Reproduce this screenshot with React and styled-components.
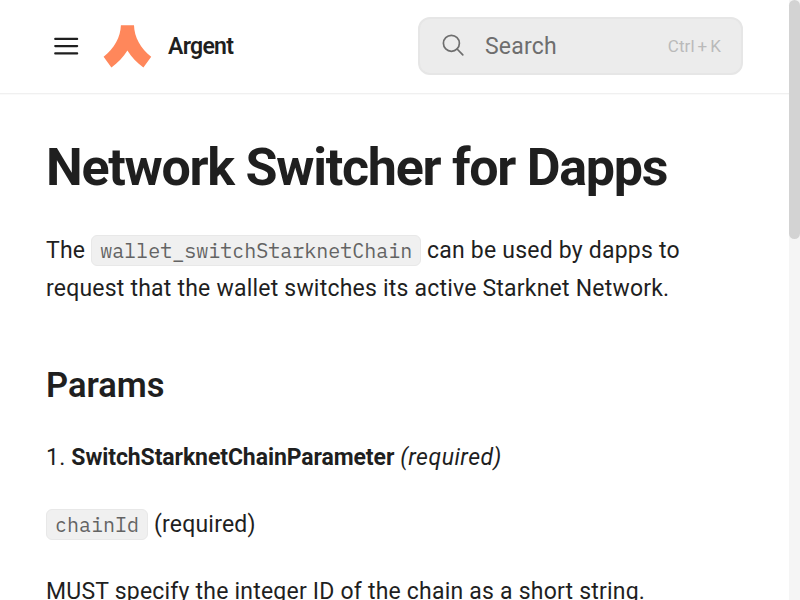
import React from "react";
import styled, { createGlobalStyle } from "styled-components";

const GlobalStyle = createGlobalStyle`
  *, *::before, *::after { box-sizing: border-box; }
  body {
    margin: 0;
    background: #fff;
    color: #1f1f1f;
    font-family: Roboto, "Liberation Sans", sans-serif;
    overflow: hidden;
  }
`;

const Page = styled.div`
  display: flex;
  width: 800px;
  height: 600px;
  overflow: hidden;
`;

const Main = styled.div`
  width: 789px;
  height: 600px;
  overflow: hidden;
`;

const Header = styled.header`
  display: flex;
  align-items: center;
  height: 94px;
  padding: 0 46px 2px 53px;
  border-bottom: 1px solid #f0f0f0;
  box-shadow: 0 1px 0 #fafafa;
`;

const MenuButton = styled.button`
  display: flex;
  width: 26px;
  height: 26px;
  padding: 0;
  border: 0;
  background: none;
`;

const Brand = styled.a`
  display: flex;
  align-items: center;
  gap: 16px;
  margin-left: 24px;
  font-size: 23px;
  font-weight: 600;
  letter-spacing: -0.7px;
  color: #1f1f1f;
`;

const BrandName = styled.span`
  padding-top: 2px;
`;

const Search = styled.div`
  display: flex;
  align-items: center;
  width: 325px;
  height: 58px;
  margin-left: auto;
  padding: 0 20px 0 22px;
  border: 2px solid #e6e6e6;
  border-radius: 12px;
  background: #ececec;
  color: #6e6e6e;
  font-size: 23px;
`;

const SearchLabel = styled.span`
  margin-left: 20px;
  padding-top: 2px;
  letter-spacing: 0.2px;
`;

const Shortcut = styled.kbd`
  margin-left: auto;
  color: #bababa;
  font-family: inherit;
  font-size: 17px;
  word-spacing: -1.4px;
  letter-spacing: 0.1px;
`;

const Article = styled.main`
  padding: 45px 46px 0;
`;

const Title = styled.h1`
  margin: 0;
  font-size: 52px;
  line-height: 58px;
  font-weight: 700;
  letter-spacing: -1.27px;
  white-space: nowrap;
`;

const Paragraph = styled.p`
  margin: ${(p) => p.$top}px 0 0;
  font-size: 23px;
  line-height: 38px;
  letter-spacing: 0.21px;
  white-space: nowrap;
`;

const Strong = styled.b`
  letter-spacing: -0.09px;
`;

const Emphasis = styled.i`
  letter-spacing: 0.5px;
`;

const Heading = styled.h2`
  margin: 53px 0 0;
  font-size: 34.5px;
  line-height: 48px;
  font-weight: 600;
`;

const Code = styled.code`
  display: inline-block;
  height: 31px;
  padding: 0 8px;
  border: 1px solid #e8e8e8;
  border-radius: 6px;
  background: #f0f0f0;
  color: #636363;
  font-family: "IBM Plex Mono", "Liberation Mono", monospace;
  font-size: 20px;
  line-height: 29px;
  letter-spacing: 0;
`;

const ScrollTrack = styled.div`
  width: 11px;
  height: 600px;
  background: #f5f5f5;
`;

const ScrollThumb = styled.div`
  height: 239px;
  border-radius: 6px;
  background: #d3d3d3;
`;

const MenuIcon = () => (
  <svg width="26" height="26" viewBox="0 0 26 26" stroke="#1f1f1f" strokeWidth="2.1" strokeLinecap="round">
    <path d="M2.2 5.9h22M2.2 13.1h22M2.2 20.4h22" />
  </svg>
);

const Logo = () => (
  <svg width="49" height="46" viewBox="0 0 49 46" fill="#ff875b">
    <path d="M17.9 2.3H31C31.2 14 37.6 25.5 48.2 33.8L40.4 44.5C34 39.6 28.4 34.3 24.4 27.6C20.4 34.3 14.8 39.6 8.4 44.5L.6 33.8C11.3 25.5 17.6 14 17.9 2.3Z" />
  </svg>
);

const SearchIcon = () => (
  <svg width="23" height="23" viewBox="0 0 23 23" fill="none" stroke="#6e6e6e" strokeWidth="1.7" strokeLinecap="round">
    <circle cx="9.4" cy="9.3" r="8" />
    <path d="M15.1 15l5.7 5.8" />
  </svg>
);

export default function App() {
  return (
    <Page>
      <GlobalStyle />
      <Main>
        <Header>
          <MenuButton aria-label="Menu"><MenuIcon /></MenuButton>
          <Brand><Logo /><BrandName>Argent</BrandName></Brand>
          <Search>
            <SearchIcon />
            <SearchLabel>Search</SearchLabel>
            <Shortcut>Ctrl + K</Shortcut>
          </Search>
        </Header>
        <Article>
          <Title>Network Switcher for Dapps</Title>
          <Paragraph $top={35}>
            The <Code>wallet_switchStarknetChain</Code> can be used by dapps to
            <br />
            request that the wallet switches its active Starknet Network.
          </Paragraph>
          <Heading>Params</Heading>
          <Paragraph $top={30}>
            1. <Strong>SwitchStarknetChainParameter</Strong> <Emphasis>(required)</Emphasis>
          </Paragraph>
          <Paragraph $top={29}>
            <Code>chainId</Code> (required)
          </Paragraph>
          <Paragraph $top={29}>MUST specify the integer ID of the chain as a short string.</Paragraph>
        </Article>
      </Main>
      <ScrollTrack><ScrollThumb /></ScrollTrack>
    </Page>
  );
}
